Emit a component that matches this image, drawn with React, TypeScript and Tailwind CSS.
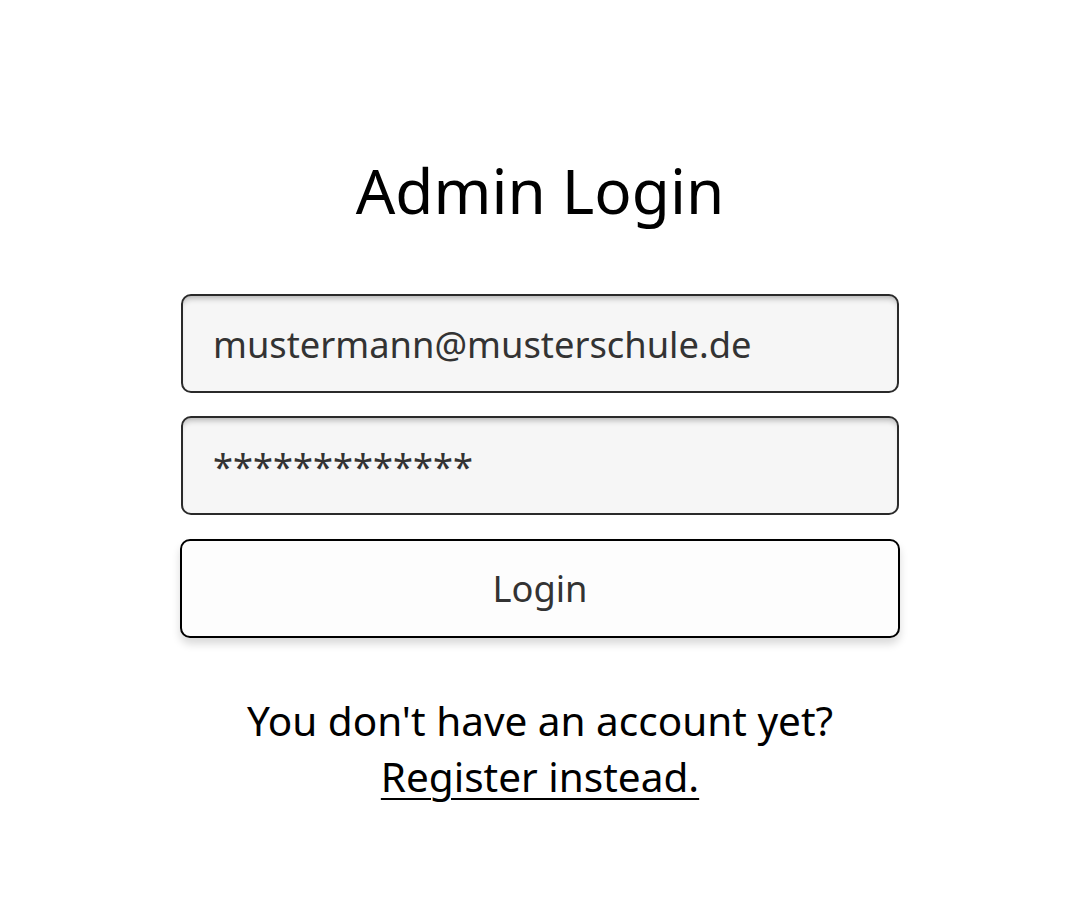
export default function App() {
  return (
    <div
      className="min-h-screen bg-white flex flex-col items-center pt-[150px] text-black"
      style={{ fontFamily: '"Noto Sans", "Open Sans", sans-serif' }}
    >
      <h1 className="text-[62px] leading-[80px] font-normal">Admin Login</h1>

      <form className="mt-[64px] w-[720px] flex flex-col gap-[23px]">
        <input
          type="email"
          defaultValue="mustermann@musterschule.de"
          className="mx-[1px] h-[99px] rounded-[10px] border-2 border-[#2a2a2a] bg-[#f6f6f6] px-[30px] text-[36.3px] text-[#333] shadow-[inset_0_6px_6px_-4px_rgba(0,0,0,0.3)] outline-none"
        />
        <input
          type="text"
          defaultValue="*************"
          className="mx-[1px] h-[99px] rounded-[10px] border-2 border-[#2a2a2a] bg-[#f6f6f6] px-[30px] text-[36.3px] text-[#333] shadow-[inset_0_6px_6px_-4px_rgba(0,0,0,0.3)] outline-none"
        />
        <button
          type="button"
          className="mt-[1px] h-[99px] w-full rounded-[10px] border-2 border-black bg-[#fdfdfd] text-[36.3px] text-[#333] shadow-[0_6px_8px_rgba(0,0,0,0.15)]"
        >
          Login
        </button>
      </form>

      <p className="mt-[55px] text-center text-[40.5px] leading-[56px]">
        You don't have an account yet?
        <br />
        <a href="#" className="underline underline-offset-[6px] decoration-2">
          Register instead.
        </a>
      </p>
    </div>
  )
}
